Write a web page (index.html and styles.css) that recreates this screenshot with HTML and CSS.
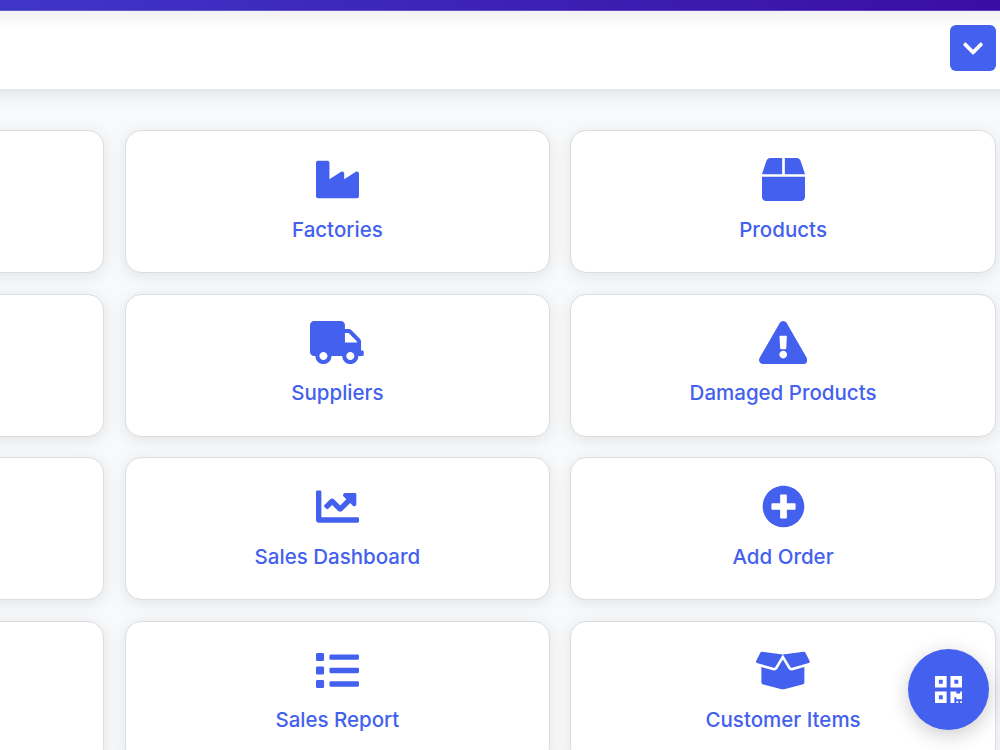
FILE: index.html
```html
<!DOCTYPE html>
<html lang="en">
<head>
    <meta charset="UTF-8">
    <meta name="viewport" content="width=device-width, initial-scale=1.0">
    <title>Dashboard</title>
    <link rel="stylesheet" href="styles.css">
</head>
<body>
    <div class="topbar"></div>

    <header class="header">
        <button class="toggle-btn" aria-label="Toggle menu">
            <svg viewBox="0 0 448 512"><path d="M207.029 381.476L12.686 187.132c-9.373-9.373-9.373-24.569 0-33.941l22.667-22.667c9.357-9.357 24.522-9.375 33.901-.04L224 284.505l154.745-154.021c9.379-9.335 24.544-9.317 33.901.04l22.667 22.667c9.373 9.373 9.373 24.569 0 33.941L240.971 381.476c-9.373 9.372-24.569 9.372-33.942 0z"/></svg>
        </button>
    </header>

    <main class="menu-grid">
        <div class="card"></div>
        <a class="card">
            <svg viewBox="0 0 512 512"><path d="M475.115 163.781L336 252.309v-68.28c0-18.916-20.931-30.399-36.885-20.248L160 252.309V56c0-13.255-10.745-24-24-24H24C10.745 32 0 42.745 0 56v400c0 13.255 10.745 24 24 24h464c13.255 0 24-10.745 24-24V184.029c0-18.917-20.931-30.399-36.885-20.248z"/></svg>
            <span>Factories</span>
        </a>
        <a class="card">
            <svg viewBox="0 0 512 512"><path d="M509.5 184.6L458.9 32.8C452.4 13.2 434.1 0 413.4 0H272v192h238.7c-.4-2.5-.4-5-1.2-7.4zM240 0H98.6c-20.7 0-39 13.2-45.5 32.8L2.5 184.6c-.8 2.4-.8 4.9-1.2 7.4H240V0zM0 224v240c0 26.5 21.5 48 48 48h416c26.5 0 48-21.5 48-48V224H0z"/></svg>
            <span>Products</span>
        </a>

        <div class="card"></div>
        <a class="card">
            <svg viewBox="0 0 640 512"><path d="M624 352h-16V243.9c0-12.7-5.1-24.9-14.1-33.9L494 110.1c-9-9-21.2-14.1-33.9-14.1H416V48c0-26.5-21.5-48-48-48H48C21.5 0 0 21.5 0 48v320c0 26.5 21.5 48 48 48h16c0 53 43 96 96 96s96-43 96-96h128c0 53 43 96 96 96s96-43 96-96h48c8.8 0 16-7.2 16-16v-32c0-8.8-7.2-16-16-16zM160 464c-26.5 0-48-21.5-48-48s21.5-48 48-48 48 21.5 48 48-21.5 48-48 48zm320 0c-26.5 0-48-21.5-48-48s21.5-48 48-48 48 21.5 48 48-21.5 48-48 48zm80-208H416V144h44.1l99.9 99.9V256z"/></svg>
            <span>Suppliers</span>
        </a>
        <a class="card">
            <svg viewBox="0 0 576 512"><path d="M569.517 440.013C587.975 472.007 564.806 512 527.94 512H48.054c-36.937 0-59.999-40.055-41.577-71.987L246.423 23.985c18.467-32.009 64.72-31.951 83.154 0l239.94 416.028zM288 354c-25.405 0-46 20.595-46 46s20.595 46 46 46 46-20.595 46-46-20.595-46-46-46zm-43.673-165.346l7.418 136c.347 6.364 5.609 11.346 11.982 11.346h48.546c6.373 0 11.635-4.982 11.982-11.346l7.418-136c.375-6.874-5.098-12.654-11.982-12.654h-63.383c-6.884 0-12.356 5.78-11.981 12.654z"/></svg>
            <span>Damaged Products</span>
        </a>

        <div class="card"></div>
        <a class="card">
            <svg viewBox="0 0 512 512"><path d="M496 384H64V80c0-8.84-7.16-16-16-16H16C7.16 64 0 71.16 0 80v336c0 17.67 14.33 32 32 32h464c8.84 0 16-7.16 16-16v-32c0-8.84-7.16-16-16-16zM464 96H345.94c-21.38 0-32.09 25.85-16.97 40.97l32.4 32.4L288 242.75l-73.37-73.37c-12.5-12.5-32.76-12.5-45.25 0l-68.69 68.69c-6.25 6.25-6.25 16.38 0 22.63l22.62 22.62c6.25 6.25 16.38 6.25 22.63 0L192 237.25l73.37 73.37c12.5 12.5 32.76 12.5 45.25 0l96-96 32.4 32.4c15.12 15.12 40.97 4.41 40.97-16.97V112c.01-8.84-7.15-16-15.99-16z"/></svg>
            <span>Sales Dashboard</span>
        </a>
        <a class="card">
            <svg viewBox="0 0 512 512"><path d="M256 8C119 8 8 119 8 256s111 248 248 248 248-111 248-248S393 8 256 8zm144 276c0 6.6-5.4 12-12 12h-92v92c0 6.6-5.4 12-12 12h-56c-6.6 0-12-5.4-12-12v-92h-92c-6.6 0-12-5.4-12-12v-56c0-6.6 5.4-12 12-12h92v-92c0-6.6 5.4-12 12-12h56c6.6 0 12 5.4 12 12v92h92c6.6 0 12 5.4 12 12v56z"/></svg>
            <span>Add Order</span>
        </a>

        <div class="card"></div>
        <a class="card">
            <svg viewBox="0 0 512 512"><path d="M80 368H16a16 16 0 0 0-16 16v64a16 16 0 0 0 16 16h64a16 16 0 0 0 16-16v-64a16 16 0 0 0-16-16zm0-320H16A16 16 0 0 0 0 64v64a16 16 0 0 0 16 16h64a16 16 0 0 0 16-16V64a16 16 0 0 0-16-16zm0 160H16a16 16 0 0 0-16 16v64a16 16 0 0 0 16 16h64a16 16 0 0 0 16-16v-64a16 16 0 0 0-16-16zm416 176H176a16 16 0 0 0-16 16v32a16 16 0 0 0 16 16h320a16 16 0 0 0 16-16v-32a16 16 0 0 0-16-16zm0-320H176a16 16 0 0 0-16 16v32a16 16 0 0 0 16 16h320a16 16 0 0 0 16-16V80a16 16 0 0 0-16-16zm0 160H176a16 16 0 0 0-16 16v32a16 16 0 0 0 16 16h320a16 16 0 0 0 16-16v-32a16 16 0 0 0-16-16z"/></svg>
            <span>Sales Report</span>
        </a>
        <a class="card">
            <svg viewBox="0 0 640 512"><path d="M425.7 256c-16.9 0-32.8-9-41.4-23.4L320 126l-64.2 106.6c-8.7 14.5-24.6 23.5-41.5 23.5-4.5 0-9-.6-13.3-1.9L64 215v178c0 14.7 10 27.5 24.2 31l216.2 54.1c10.2 2.5 20.9 2.5 31 0L551.8 424c14.2-3.6 24.2-16.4 24.2-31V215l-137 39.1c-4.3 1.3-8.8 1.9-13.3 1.9zm212.6-112.2L586.8 41c-3.1-6.2-9.8-9.8-16.7-8.9L320 64l91.7 152.1c3.8 6.3 11.4 9.3 18.5 7.3l197.9-56.5c9.9-2.9 14.7-13.9 10.2-23.1zM53.2 41L1.7 143.8c-4.6 9.2.3 20.2 10.1 23l197.9 56.5c7.1 2 14.7-1 18.5-7.3L320 64 69.8 32.1c-6.9-.8-13.5 2.7-16.6 8.9z"/></svg>
            <span>Customer Items</span>
        </a>
    </main>

    <button class="qr-btn" aria-label="Scan QR code">
        <svg viewBox="0 0 448 512"><path d="M0 224h192V32H0v192zM64 96h64v64H64V96zm192-64v192h192V32H256zm128 128h-64V96h64v64zM0 480h192V288H0v192zm64-128h64v64H64v-64zm352-64h32v128h-96v-32h-32v96h-64V288h96v32h64v-32zm0 160h32v32h-32v-32zm-64 0h32v32h-32v-32z"/></svg>
    </button>
</body>
</html>
```
FILE: styles.css
```css
* {
    box-sizing: border-box;
}

body {
    margin: 0;
    height: 100vh;
    overflow: hidden;
    display: flex;
    flex-direction: column;
    background: #f8f9fa;
    font-family: Inter, sans-serif;
}

svg {
    fill: currentColor;
    display: block;
}

.topbar {
    flex: none;
    height: 11px;
    margin: 0 -40px;
    background: linear-gradient(90deg, #3f37c9, #3a0ca3);
    border-bottom: 1px solid rgba(255, 255, 255, 0.2);
    box-shadow: 0 4px 16px rgba(0, 0, 0, 0.1);
    z-index: 2;
}

.header {
    flex: none;
    height: 78px;
    margin: 0 -40px;
    padding: 14px 44px;
    display: flex;
    align-items: flex-start;
    justify-content: flex-end;
    background: #fff;
    box-shadow: 0 3px 16px rgba(0, 0, 0, 0.12);
}

.toggle-btn {
    width: 46px;
    height: 46px;
    padding: 0 0 0 1px;
    display: flex;
    align-items: center;
    justify-content: center;
    border: none;
    border-radius: 6px;
    background: #4361ee;
    color: #fff;
}

.toggle-btn svg {
    height: 23px;
}

/* the first column runs off the left edge */
.menu-grid {
    flex: none;
    align-self: flex-end;
    display: grid;
    grid-template-columns: repeat(3, 425.3px);
    grid-auto-rows: 143px;
    gap: 20.55px 20.4px;
    padding: 41.2px 4.3px 0 0;
}

.card {
    display: flex;
    flex-direction: column;
    align-items: center;
    gap: 12.85px;
    padding-top: 26.7px;
    background: #fff;
    border: 1px solid #dcdddf;
    border-radius: 16px;
    box-shadow: 0 3px 16px rgba(0, 0, 0, 0.09);
    color: #4361ee;
}

.card svg {
    height: 43px;
}

.card span {
    font-size: 20.5px;
    line-height: 31px;
    font-weight: 500;
}

.qr-btn {
    position: fixed;
    right: 11px;
    bottom: 20px;
    width: 81px;
    height: 81px;
    padding: 0;
    display: flex;
    align-items: center;
    justify-content: center;
    border: none;
    border-radius: 50%;
    background: #4361ee;
    color: #fff;
    box-shadow: 0 5px 20px rgba(0, 0, 0, 0.2);
}

.qr-btn svg {
    height: 31px;
}
```
